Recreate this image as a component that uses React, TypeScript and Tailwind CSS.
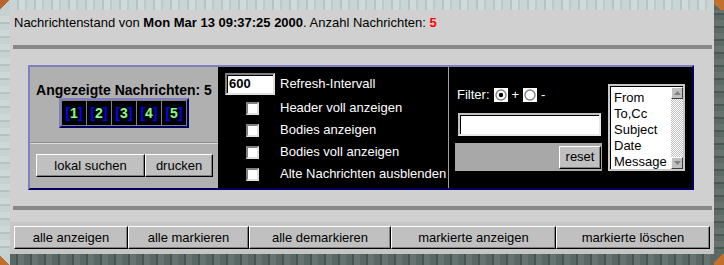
import React from "react";

const btn =
  "h-[23px] flex items-center justify-center bg-[#c0c0c0] border border-t-white border-l-white border-r-black border-b-black shadow-[inset_-1px_-1px_0_#808080] text-[13px] text-black";

function Radio({ checked }: { checked?: boolean }) {
  return (
    <svg width="14" height="14" viewBox="0 0 14 14" className="shrink-0">
      <rect x="0" y="0" width="14" height="14" fill="#ffffff" />
      <circle cx="7" cy="7" r="5" fill="#ffffff" stroke="#808080" strokeWidth="1.4" />
      {checked && <circle cx="7" cy="7" r="2.2" fill="#000000" />}
    </svg>
  );
}

function Checkbox() {
  return (
    <div className="w-[13px] h-[13px] bg-white border-2 border-t-[#808080] border-l-[#808080] border-r-[#e0e0e0] border-b-[#e0e0e0]" />
  );
}

function ScrollArrow({ up }: { up?: boolean }) {
  return (
    <div className="w-[12px] h-[12px] bg-[#c0c0c0] border border-t-white border-l-white border-r-[#404040] border-b-[#404040] flex items-center justify-center">
      <svg width="7" height="4" viewBox="0 0 7 4">
        <path d={up ? "M0 4 L3.5 0 L7 4 Z" : "M0 0 L3.5 4 L7 0 Z"} fill="#808080" />
      </svg>
    </div>
  );
}

export default function App() {
  const options = ["From", "To,Cc", "Subject", "Date", "Message"];
  const toggles = [
    "Header voll anzeigen",
    "Bodies anzeigen",
    "Bodies voll anzeigen",
    "Alte Nachrichten ausblenden",
  ];
  const actions = [
    { label: "alle anzeigen", w: "w-[114px]" },
    { label: "alle markieren", w: "w-[121px]" },
    { label: "alle demarkieren", w: "w-[142px]" },
    { label: "markierte anzeigen", w: "w-[165px]" },
    { label: "markierte löschen", w: "w-[154px]" },
  ];

  return (
    <div className="w-[724px] h-[265px] grid grid-cols-[10px_704px_10px] grid-rows-[10px_244px_11px] font-['Liberation_Sans',Arial,sans-serif] overflow-hidden">
      {/* frame */}
      <div className="bg-[linear-gradient(135deg,#b8642c_50%,#c4d0d0_50%)]" />
      <div className="[background:repeating-linear-gradient(90deg,#c9d5d5_0_7px,#b7c4c4_7px_9px,#d0dada_9px_15px,#bccaca_15px_17px)]" />
      <div className="bg-[linear-gradient(225deg,#c2702e_70%,#5a6764_70%)]" />
      <div className="[background:repeating-linear-gradient(0deg,#c6d2d2_0_6px,#b5c2c2_6px_8px,#cdd8d8_8px_14px)]" />

      {/* content */}
      <div className="bg-[#d0d0d0] flex flex-col text-black">
        <div className="pt-[4px] pl-[4px] text-[13px] leading-[17px]">
          Nachrichtenstand von <b>Mon Mar 13 09:37:25 2000</b>. Anzahl Nachrichten:{" "}
          <b className="text-[#ff0000]">5</b>
        </div>
        <div className="mt-[14px] ml-[3px] w-[699px] h-[4px] bg-[#888888]" />

        {/* main table */}
        <div className="mt-[16px] ml-[18px] w-[666px] h-[125px] flex border-2 border-t-[#8080c0] border-l-[#8080c0] border-r-[#000060] border-b-[#000060] bg-black">
          {/* left cell */}
          <div className="w-[188px] flex flex-col bg-[#b0b0b0]">
            <div className="h-[75px] flex flex-col items-center pt-[15px]">
              <div className="text-[14px] font-bold leading-[16px]">Angezeigte Nachrichten: 5</div>
              <div className="flex gap-px bg-[#808080] p-px border-2 border-t-[#8080c0] border-l-[#8080c0] border-r-[#000060] border-b-[#000060]">
                {[1, 2, 3, 4, 5].map((n) => (
                  <div
                    key={n}
                    className="w-[24px] h-[24px] bg-black flex items-center justify-center text-[14px] font-bold"
                  >
                    <span className="text-[#0000ff]">[</span>
                    <span className="text-[#80ff80]">{n}</span>
                    <span className="text-[#0000ff]">]</span>
                  </div>
                ))}
              </div>
            </div>
            <div className="h-px bg-[#8c8c8c]" />
            <div className="h-px bg-[#dcdcdc]" />
            <div className="flex pl-[6px] pt-[10px]">
              <div className={`${btn} w-[109px]`}>lokal suchen</div>
              <div className={`${btn} w-[68px]`}>drucken</div>
            </div>
          </div>

          {/* middle cell */}
          <div className="w-[230px] pl-[7px] pt-[6px] text-white text-[13px]">
            <div className="flex items-center h-[22px]">
              <div className="w-[50px] h-[22px] bg-white border-2 border-t-[#808080] border-l-[#808080] border-r-[#e0e0e0] border-b-[#e0e0e0] shadow-[inset_1px_1px_0_#000] text-black font-bold text-[13px] leading-[18px] pl-[2px]">
                600
              </div>
              <span className="ml-[5px]">Refresh-Intervall</span>
            </div>
            <div className="mt-[2px] flex flex-col">
              {toggles.map((t) => (
                <div key={t} className="flex items-center h-[22px]">
                  <div className="w-[55px] flex justify-center">
                    <Checkbox />
                  </div>
                  <span>{t}</span>
                </div>
              ))}
            </div>
          </div>

          <div className="w-px bg-[#a0a0a0]" />

          {/* right cell */}
          <div className="flex-1 flex pl-[6px] text-white text-[13px]">
            <div className="w-[147px] flex flex-col pt-[20px]">
              <div className="h-[16px] flex items-center ml-[2px] gap-[4px]">
                <span>Filter:</span>
                <Radio checked />
                <span>+</span>
                <Radio />
                <span>-</span>
              </div>
              <div className="mt-[10px] ml-[3px] w-[143px] h-[23px] bg-white border-2 border-t-[#c0c0c0] border-l-[#c0c0c0] border-r-[#e8e8e8] border-b-[#e8e8e8] shadow-[inset_1px_1px_0_#000]" />
              <div className="mt-[7px] h-[28px] bg-[#a8a8a8] flex items-center justify-end pr-[1px]">
                <div className={`${btn} w-[42px]`}>reset</div>
              </div>
            </div>
            <div className="ml-[6px] mt-[17px] w-[77px] h-[87px] bg-white border-2 border-[#c8c8c8] flex">
              <div className="flex-1 border-t border-l border-black pl-[3px] pt-[3px] text-black text-[13px] leading-[16px]">
                {options.map((o) => (
                  <div key={o}>{o}</div>
                ))}
              </div>
              <div className="w-[12px] flex flex-col border-t border-black">
                <ScrollArrow up />
                <div className="flex-1 [background:repeating-conic-gradient(#c0c0c0_0_25%,#ffffff_0_50%)_0_0/2px_2px]" />
                <ScrollArrow />
              </div>
            </div>
          </div>
        </div>

        <div className="mt-[16px] ml-[3px] w-[699px] h-[4px] bg-[#888888]" />

        {/* action bar */}
        <div className="mt-[12px] flex-1 bg-[#c6c6c6] pl-[4px] pt-[4px] flex items-start">
          {actions.map((a) => (
            <div key={a.label} className={`${btn} ${a.w}`}>
              {a.label}
            </div>
          ))}
        </div>
      </div>

      <div className="[background:repeating-linear-gradient(0deg,#5c6a66_0_5px,#4a5754_5px_7px,#65726e_7px_13px)]" />
      <div className="bg-[linear-gradient(45deg,#c0702e_45%,#c4d0d0_45%)]" />
      <div className="[background:repeating-linear-gradient(90deg,#5a6865_0_6px,#485451_6px_8px,#66736f_8px_14px)]" />
      <div className="bg-[linear-gradient(315deg,#c2702e_60%,#5a6764_60%)]" />
    </div>
  );
}
